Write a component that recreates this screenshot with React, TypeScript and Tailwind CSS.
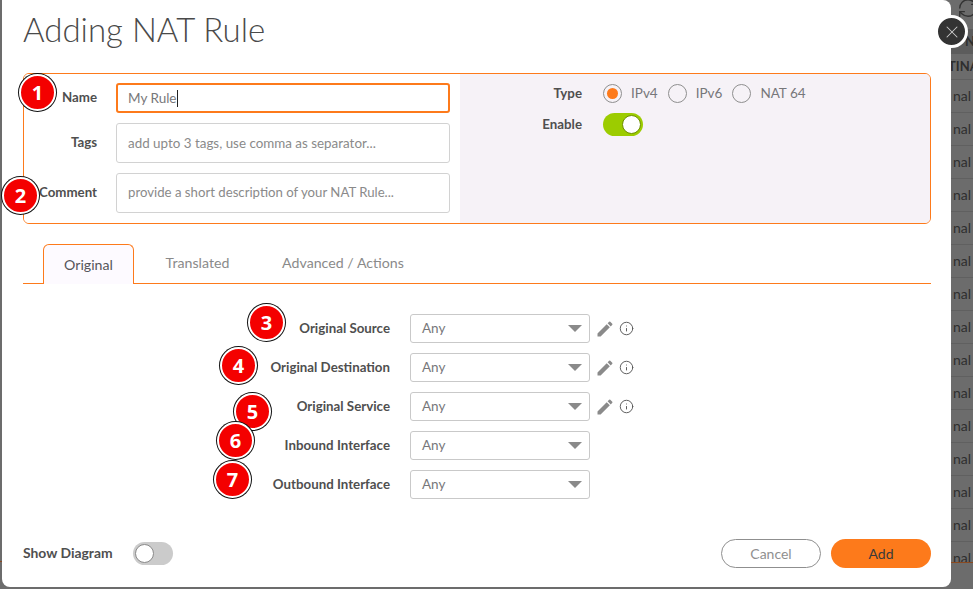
import { Info, RefreshCw, X } from 'lucide-react';

const font = 'font-["Lato","Noto_Sans",sans-serif]';

const stepBadge =
  'absolute flex h-[37px] w-[37px] items-center justify-center rounded-full border-2 border-white bg-[#f40000] text-[20px] font-bold text-white shadow-[0_0_0_1px_#111] font-["Open_Sans",sans-serif]';

function StepBadge({ n, x, y }: { n: number; x: number; y: number }) {
  return (
    <div className={stepBadge} style={{ left: x, top: y }}>
      {n}
    </div>
  );
}

function Radio({ label, checked }: { label: string; checked?: boolean }) {
  return (
    <div className="flex items-center gap-[9px]">
      <span className="flex h-[19px] w-[19px] items-center justify-center rounded-full border border-[#8f8f8f]">
        {checked && <span className="h-[11px] w-[11px] rounded-full bg-[#fd7a1b]" />}
      </span>
      <span className="text-[13.5px] leading-[19px] text-[#77777a]">{label}</span>
    </div>
  );
}

function TextRow({ label, children }: { label: string; children: React.ReactNode }) {
  return (
    <div className="flex items-center">
      <label className="w-[73px] text-right text-[13.3px] font-bold text-[#4f4f4f]">{label}</label>
      <div className="ml-[19px] flex-1">{children}</div>
    </div>
  );
}

function SelectRow({ label, icons }: { label: string; icons?: boolean }) {
  return (
    <div className="flex h-[29px] items-center">
      <label className="w-[367px] text-right text-[13.3px] font-bold text-[#4f4f4f]">{label}</label>
      <div className="ml-[20px] flex h-[29px] w-[180px] items-center justify-between rounded-[3px] border border-[#c9c9c9] bg-white pl-[11px] pr-[7px]">
        <span className="text-[13.5px] text-[#77777a]">Any</span>
        <span className="h-0 w-0 border-x-[7px] border-t-[7px] border-x-transparent border-t-[#8a8a8a]" />
      </div>
      {icons && (
        <div className="ml-[5px] flex items-center gap-[4px]">
          <svg width="20" height="20" viewBox="0 0 24 24" fill="#8a8a8a">
            <path d="M3 17.25V21h3.75L17.81 9.94l-3.75-3.75L3 17.25zM20.71 7.04a1 1 0 0 0 0-1.41l-2.34-2.34a1 1 0 0 0-1.41 0l-1.83 1.83 3.75 3.75 1.83-1.83z" />
          </svg>
          <Info size={15} stroke="#555" strokeWidth={1.5} />
        </div>
      )}
    </div>
  );
}

export default function App() {
  const rows = [0, 1, 2, 3, 4, 5, 6, 7, 8, 9, 10, 11, 12, 13];

  return (
    <div className={`relative flex h-[589px] w-[973px] overflow-hidden bg-[#6c6c6c] pb-[2px] pl-[2px] ${font}`}>
      <div className="relative flex w-[949px] shrink-0 flex-col rounded-b-[8px] rounded-tr-[8px] bg-white pl-[21px] pr-[20px]">
        <h1 className="mt-[10px] h-[38px] text-[33px] leading-[38px] font-light text-[#4a4a4a]">Adding NAT Rule</h1>

        <div className="mt-[25px] flex h-[151px] overflow-hidden rounded-[6px] border border-[#fd7a1b]">
          <div className="flex w-[436px] flex-col gap-[10px] bg-white pt-[9px] pr-[10px]">
            <TextRow label="Name">
              <div className="flex h-[30px] items-center rounded-[3px] border-2 border-[#fd7a1b] pl-[10px] text-[13.5px] text-[#77777a]">
                My Rule<span className="h-[17px] w-px bg-[#222]" />
              </div>
            </TextRow>
            <TextRow label="Tags">
              <div className="flex h-[40px] items-center rounded-[3px] border border-[#d2d2d2] pl-[11px] text-[13.4px] text-[#8a8a8a]">
                add upto 3 tags, use comma as separator...
              </div>
            </TextRow>
            <TextRow label="Comment">
              <div className="flex h-[40px] items-center rounded-[3px] border border-[#d2d2d2] pl-[11px] text-[13.2px] text-[#8a8a8a]">
                provide a short description of your NAT Rule...
              </div>
            </TextRow>
          </div>
          <div className="flex flex-1 flex-col gap-[10px] bg-[#f6f2f7] pt-[10px]">
            <div className="flex items-center">
              <span className="w-[122px] text-right text-[13.3px] leading-[19px] font-bold text-[#4f4f4f]">Type</span>
              <div className="ml-[21px] flex items-center gap-[10px]">
                <Radio label="IPv4" checked />
                <Radio label="IPv6" />
                <Radio label="NAT 64" />
              </div>
            </div>
            <div className="flex items-center">
              <span className="w-[122px] text-right text-[13.3px] font-bold text-[#4f4f4f]">Enable</span>
              <div className="ml-[21px] flex h-[23px] w-[40px] items-center justify-end rounded-full bg-[#9ccc00] pr-[2px]">
                <span className="h-[19px] w-[19px] rounded-full border border-[#6d8f00] bg-white" />
              </div>
            </div>
          </div>
        </div>

        <div className="mt-[20px] flex h-[40px] items-end border-b border-[#fd7a1b] text-[14.2px]">
          <div className="mb-[-1px] ml-[20px] flex h-[40px] w-[91px] items-center justify-center rounded-t-[6px] border border-b-0 border-[#fd7a1b] bg-[#fdfaff] text-[#55555a]">
            Original
          </div>
          <div className="flex h-[40px] w-[127px] items-center justify-center text-[#8a8a8a]">Translated</div>
          <div className="flex h-[40px] w-[164px] items-center justify-center text-[#8a8a8a]">Advanced / Actions</div>
        </div>

        <div className="mt-[30px] flex flex-col gap-[10px]">
          <SelectRow label="Original Source" icons />
          <SelectRow label="Original Destination" icons />
          <SelectRow label="Original Service" icons />
          <SelectRow label="Inbound Interface" />
          <SelectRow label="Outbound Interface" />
        </div>

        <div className="mt-auto mb-[19px] flex items-center">
          <span className="text-[13.9px] font-bold text-[#4f4f4f]">Show Diagram</span>
          <div className="ml-[20px] flex h-[23px] w-[40px] items-center rounded-full bg-[#cbcbcb] pl-[2px]">
            <span className="h-[19px] w-[19px] rounded-full border border-[#8a8a8a] bg-white" />
          </div>
          <button className="ml-auto h-[29px] w-[100px] rounded-full border border-[#8f8f8f] bg-white text-[14px] text-[#8f8f8f]">
            Cancel
          </button>
          <button className="ml-[10px] h-[29px] w-[100px] rounded-full bg-[#fd7a1b] text-[14px] text-[#3a3a3a]">
            Add
          </button>
        </div>
      </div>

      {/* dimmed table behind the dialog */}
      <div className="flex w-[22px] shrink-0 flex-col text-[14px] text-[#2e2e2e]">
        <div className="h-[29px] shrink-0 pl-[6px]">
          <RefreshCw size={22} stroke="#333" strokeWidth={1.5} className="mt-[-3px]" />
        </div>
        <div className="h-[25px] shrink-0 bg-[#5c5c5c] pl-[14px] text-[13px] leading-[25px] font-bold">N</div>
        <div className="h-[26px] shrink-0 overflow-hidden border-b border-[#606060] pt-[2px] text-[13px] leading-[20px] font-bold whitespace-nowrap">
          <span className="ml-[-3px] block">TINA</span>
        </div>
        {rows.map((r) => (
          <div key={r} className="h-[33px] shrink-0 border-b border-[#606060] pt-[6px] pl-[2px] leading-[20px]">
            nal
          </div>
        ))}
        <div className="h-[21px] shrink-0 overflow-hidden border-b border-[#8a4a20] pt-[6px] pl-[2px] leading-[20px]">nal</div>
      </div>

      <div className="absolute top-[561px] left-0 h-px w-[2px] bg-[#8a4a20]" />

      <div className="absolute top-[15px] left-[935px] flex h-[33px] w-[33px] items-center justify-center rounded-full border-[3px] border-white bg-[#333333]">
        <X size={20} stroke="#cccccc" strokeWidth={1.25} />
      </div>

      <StepBadge n={1} x={19} y={74} />
      <StepBadge n={2} x={2} y={177} />
      <StepBadge n={3} x={248} y={304} />
      <StepBadge n={4} x={220} y={347} />
      <StepBadge n={5} x={234} y={393} />
      <StepBadge n={6} x={217} y={422} />
      <StepBadge n={7} x={214} y={461} />
    </div>
  );
}
